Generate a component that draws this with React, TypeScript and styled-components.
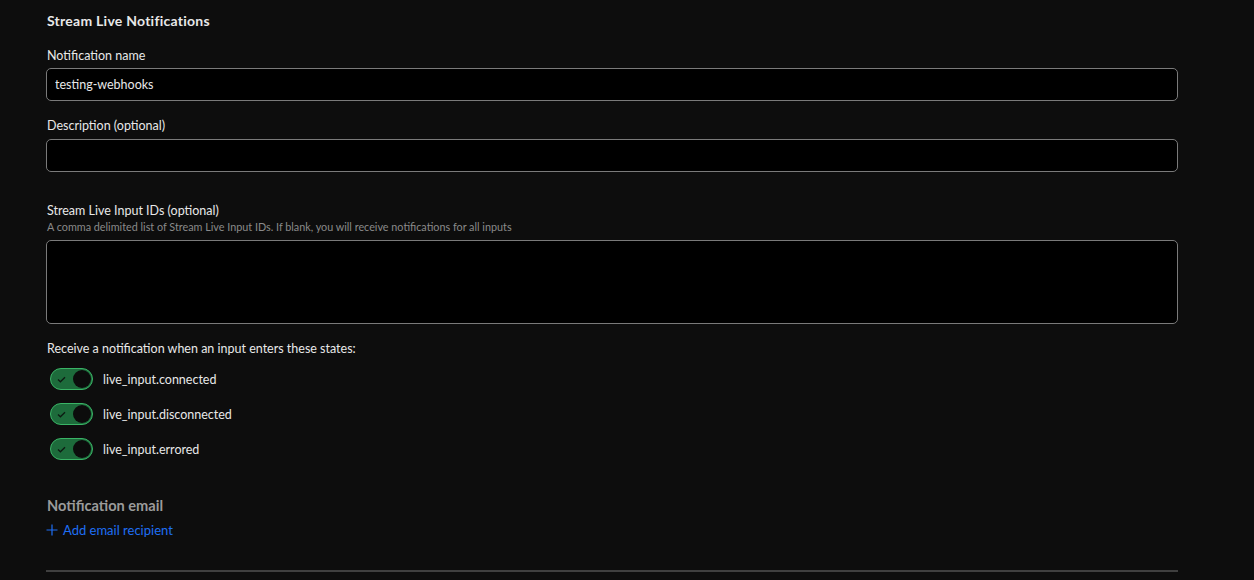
import React from "react";
import styled, { createGlobalStyle } from "styled-components";

const GlobalStyle = createGlobalStyle`
  html, body { margin: 0; padding: 0; background: #0d0d0d; }
  body { font-family: "Segoe UI", Lato, "Noto Sans", sans-serif; color: #e8e8e8; }
  * { box-sizing: border-box; }
`;

const Page = styled.div`
  width: 1254px;
  height: 580px;
  overflow: hidden;
  background: #0d0d0d;
  padding: 0 76px 0 46px;
  display: flex;
  flex-direction: column;
`;

const Heading = styled.h2`
  margin: 12px 0 0 1px;
  font-size: 14px;
  letter-spacing: 0.25px;
  font-weight: 700;
  line-height: 18px;
  color: #e8e8e8;
`;

const Field = styled.div<{ $top: number }>`
  display: flex;
  flex-direction: column;
  margin-top: ${(p) => p.$top}px;
`;

const Label = styled.label<{ $gap?: number }>`
  font-size: 12.5px;
  line-height: 18px;
  margin-left: 1px;
  color: #e8e8e8;
  margin-bottom: ${(p) => p.$gap ?? 0}px;
`;

const Help = styled.div`
  font-size: 10.8px;
  line-height: 14px;
  margin-left: 1px;
  color: #8a8a8a;
`;

const TextInput = styled.input`
  height: 33px;
  width: 100%;
  background: #000;
  border: 1px solid #7a7a7a;
  border-radius: 5px;
  padding: 0 8px;
  font-family: inherit;
  font-size: 12.5px;
  color: #e8e8e8;
  outline: none;
`;

const TextArea = styled.textarea`
  margin-top: 6px;
  height: 84px;
  width: 100%;
  background: #000;
  border: 1px solid #7a7a7a;
  border-radius: 5px;
  resize: none;
  outline: none;
  font-family: inherit;
`;

const ToggleList = styled.div`
  display: flex;
  flex-direction: column;
  gap: 13px;
  margin-top: 10px;
  padding-left: 4px;
`;

const ToggleRow = styled.div`
  display: flex;
  align-items: center;
  gap: 10px;
  font-size: 12.5px;
  color: #e8e8e8;
  height: 22px;
`;

const Toggle = styled.span`
  width: 43px;
  height: 22px;
  border-radius: 11px;
  background: #1d6b3b;
  border: 1.5px solid #3ab466;
  display: inline-flex;
  align-items: center;
  justify-content: space-between;
  padding: 0 1px 0 6px;
  flex-shrink: 0;
`;

const Knob = styled.span`
  width: 18px;
  height: 18px;
  border-radius: 50%;
  background: #0c0c0c;
`;

const SectionTitle = styled.div`
  margin-top: 36px;
  margin-left: 1px;
  font-size: 14.6px;
  font-weight: 700;
  line-height: 20px;
  color: #9b9b9b;
`;

const AddLink = styled.a`
  margin-top: 5px;
  display: inline-flex;
  align-items: center;
  gap: 5px;
  font-size: 13px;
  line-height: 18px;
  color: #1f6ff5;
  cursor: pointer;
  align-self: flex-start;
`;

const Divider = styled.hr`
  margin: 31px 0 0 0;
  border: none;
  border-top: 2px solid #3f3f3f;
  width: 100%;
`;

const states = ["live_input.connected", "live_input.disconnected", "live_input.errored"];

export default function App() {
  return (
    <>
      <GlobalStyle />
      <Page>
        <Heading>Stream Live Notifications</Heading>
        <Field $top={17}>
          <Label $gap={3}>Notification name</Label>
          <TextInput defaultValue="testing-webhooks" />
        </Field>
        <Field $top={16}>
          <Label $gap={4}>Description (optional)</Label>
          <TextInput />
        </Field>
        <Field $top={30}>
          <Label>Stream Live Input IDs (optional)</Label>
          <Help>A comma delimited list of Stream Live Input IDs. If blank, you will receive notifications for all inputs</Help>
          <TextArea />
        </Field>
        <Field $top={16}>
          <Label>Receive a notification when an input enters these states:</Label>
        </Field>
        <ToggleList>
          {states.map((s) => (
            <ToggleRow key={s}>
              <Toggle>
                <svg width="9" height="7" viewBox="0 0 9 7">
                  <path d="M1 3.5 L3.4 5.8 L8 1.2" fill="none" stroke="#0d1a12" strokeWidth="1.3" />
                </svg>
                <Knob />
              </Toggle>
              {s}
            </ToggleRow>
          ))}
        </ToggleList>
        <SectionTitle>Notification email</SectionTitle>
        <AddLink>
          <svg width="12" height="12" viewBox="0 0 12 12">
            <path d="M6 0.5 V11.5 M0.5 6 H11.5" stroke="#1f6ff5" strokeWidth="1.2" />
          </svg>
          Add email recipient
        </AddLink>
        <Divider />
      </Page>
    </>
  );
}
